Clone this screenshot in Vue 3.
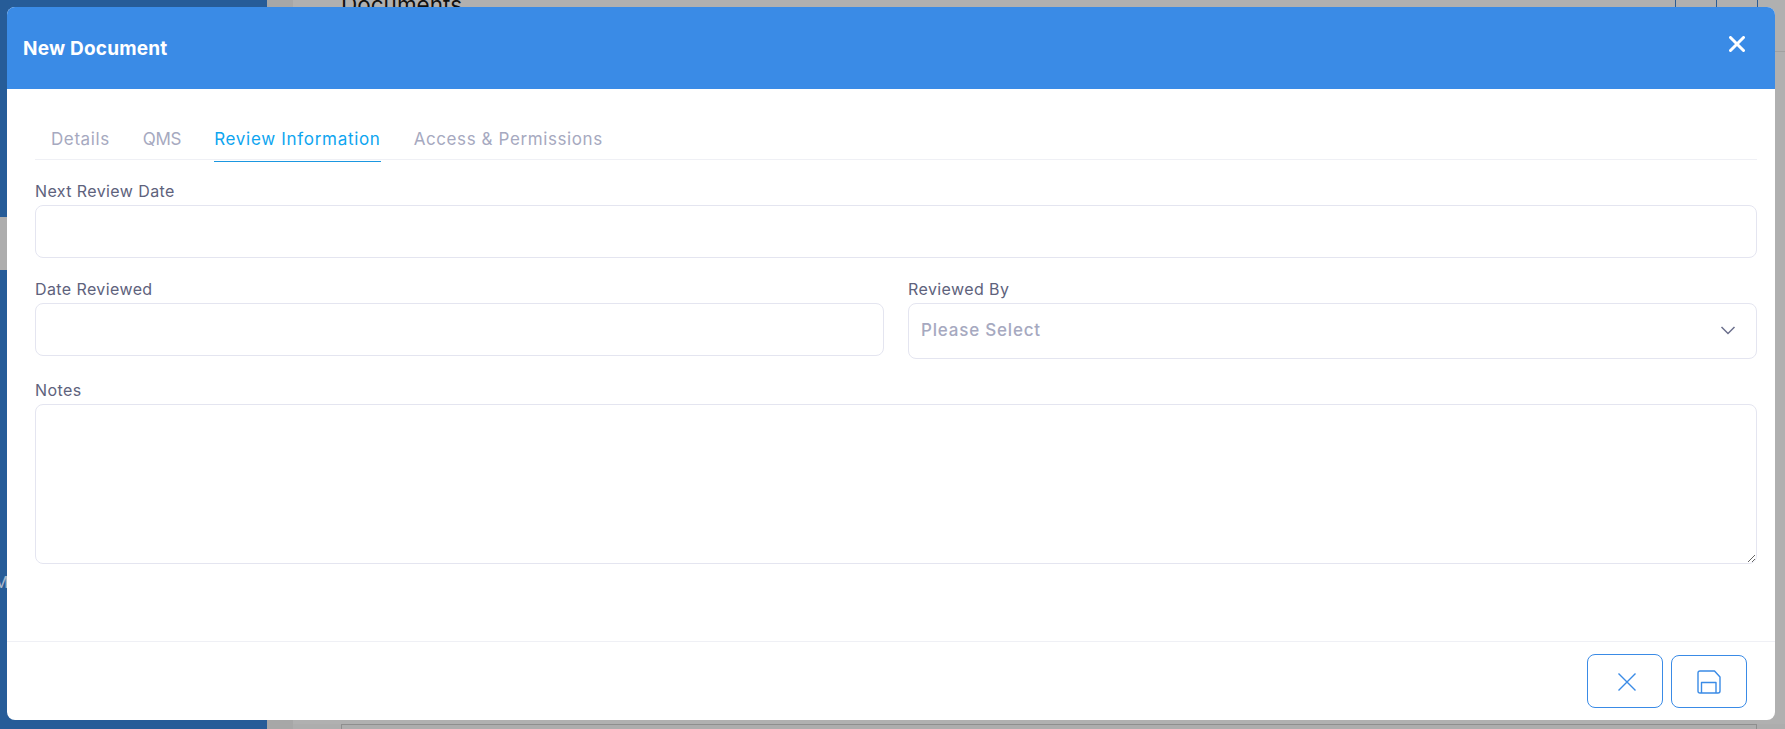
<script setup>
const tabs = [
  { label: 'Details', active: false, tight: false },
  { label: 'QMS', active: false, tight: true },
  { label: 'Review Information', active: true, tight: false },
  { label: 'Access & Permissions', active: false, tight: false },
]
</script>

<template>
  <div class="page">
    <aside class="sidebar">
      <div class="side-gap"></div>
      <span class="side-letter">M</span>
    </aside>
    <main class="backdrop-main">
      <div class="gutter"></div>
      <div class="content">
        <div class="top">
          <div class="doc-title">Documents</div>
          <div class="top-cells"><i></i><i></i></div>
          <div class="right-rule"></div>
        </div>
        <div class="bottom-card"></div>
      </div>
    </main>

    <section class="modal">
      <header class="modal-head">
        <h2>New Document</h2>
        <svg class="head-close" width="16" height="16" viewBox="0 0 16 16">
          <path d="M1.5 1.5 L14.5 14.5 M14.5 1.5 L1.5 14.5" stroke="#fff" stroke-width="3" stroke-linecap="round" />
        </svg>
      </header>

      <div class="modal-body">
        <nav class="tabs">
          <a v-for="t in tabs" :key="t.label" class="tab" :class="{ active: t.active, tight: t.tight }">{{ t.label }}</a>
        </nav>

        <div class="field first">
          <label>Next Review Date</label>
          <input type="text" class="control" />
        </div>

        <div class="row">
          <div class="field">
            <label>Date Reviewed</label>
            <input type="text" class="control" />
          </div>
          <div class="field">
            <label>Reviewed By</label>
            <div class="control select">
              <span>Please Select</span>
              <svg width="16" height="9" viewBox="0 0 16 9" fill="none">
                <path d="M1.5 1 L8 7.5 L14.5 1" stroke="#6b6f8c" stroke-width="1.5" />
              </svg>
            </div>
          </div>
        </div>

        <div class="field">
          <label>Notes</label>
          <textarea class="control area"></textarea>
        </div>
      </div>

      <footer class="modal-foot">
        <button class="btn cancel" type="button" aria-label="Cancel">
          <svg class="cancel-icon" width="18" height="18" viewBox="0 0 18 18" fill="none">
            <path d="M0.5 0.5 L17.5 17.5 M17.5 0.5 L0.5 17.5" stroke="#3a8be6" stroke-width="1.4" />
          </svg>
        </button>
        <button class="btn save" type="button" aria-label="Save">
          <svg width="24" height="24" viewBox="0 0 24 24" fill="none" stroke="#3a8be6" stroke-width="1.4" stroke-linejoin="round">
            <path d="M3 1 H17.5 L23 7 V21 Q23 23 21 23 H3 Q1 23 1 21 V3 Q1 1 3 1 Z" />
            <path d="M4.5 23 V12.5 H19 V23" />
          </svg>
        </button>
      </footer>
    </section>
  </div>
</template>

<style>
html, body { margin: 0; background: #adadad; overflow: hidden; }
</style>

<style scoped>
.page {
  width: 1785px;
  height: 729px;
  display: flex;
  overflow: hidden;
  position: relative;
  font-family: Inter, "Open Sans", sans-serif;
  background: #adadad;
}
.sidebar {
  width: 267px;
  flex: none;
  background: #265c98;
  position: relative;
  padding-top: 217px;
  box-sizing: border-box;
}
.side-gap { height: 53px; background: #adadad; }
.side-letter {
  position: absolute;
  left: -6px;
  top: 572px;
  font-size: 16px;
  color: #a9b9cd;
}
.backdrop-main { flex: 1; display: flex; min-width: 0; }
.gutter { width: 26px; flex: none; background: #a7a7a7; }
.content { flex: 1; display: flex; flex-direction: column; }
.top { height: 724px; flex: none; position: relative; background: #b0b0b0; }
.bottom-card {
  flex: 1;
  margin: 0 28px 0 48px;
  border: 1px solid #8e8e8e;
  border-bottom: 0;
}
.doc-title {
  position: absolute;
  left: 48px;
  top: -9px;
  font-size: 22.5px;
  color: #111;
}
.top-cells {
  position: absolute;
  left: 1382px;
  top: 0;
  display: flex;
}
.top-cells i {
  display: block;
  width: 40px;
  height: 7px;
  border-left: 1px solid #2a5c95;
}
.top-cells i:last-child { border-right: 1px solid #2a5c95; }
.right-rule {
  position: absolute;
  right: 0;
  top: 51px;
  width: 10px;
  height: 1px;
  background: #a0a0a0;
}

.modal {
  position: absolute;
  left: 7px;
  top: 7px;
  width: 1768px;
  height: 713px;
  background: #fff;
  border-radius: 8px;
  display: flex;
  flex-direction: column;
  overflow: hidden;
}
.modal-head {
  height: 82px;
  flex: none;
  background: #3a8be6;
  display: flex;
  align-items: center;
  justify-content: space-between;
  padding: 0 30px 0 16px;
}
.modal-head h2 {
  margin: 0;
  font-size: 19px;
  font-weight: 700;
  color: #fff;
  letter-spacing: 0.2px;
}
.head-close { display: block; margin-top: -8px; }

.modal-body {
  flex: 1;
  padding: 32px 18px 0 28px;
  min-height: 0;
}
.tabs {
  display: flex;
  gap: 33px;
  height: 39px;
  box-sizing: border-box;
  padding-left: 16px;
  border-bottom: 1px solid #eff0f5;
}
.tab {
  font-size: 17px;
  letter-spacing: 0.6px;
  line-height: 36px;
  height: 41px;
  box-sizing: border-box;
  color: #a6a9c0;
}
.tab.tight { letter-spacing: -0.3px; }
.tab.active {
  color: #0ea5f0;
  letter-spacing: 0.7px;
  border-bottom: 1px solid #1b97e0;
}
.field { display: flex; flex-direction: column; }
.field.first { margin-top: 20px; }
.field label {
  font-size: 16px;
  letter-spacing: 0.4px;
  line-height: 22px;
  color: #5e627c;
  margin-bottom: 3px;
}
.row {
  display: grid;
  grid-template-columns: 1fr 1fr;
  gap: 24px;
  margin-top: 20px;
  margin-bottom: 20px;
}
.control {
  box-sizing: border-box;
  width: 100%;
  height: 53px;
  border: 1px solid #e4e5f0;
  border-radius: 8px;
  background: #fff;
  outline: none;
  display: block;
  margin: 0;
  padding: 0 12px;
}
.select {
  height: 56px;
  display: flex;
  align-items: center;
  justify-content: space-between;
  padding: 0 20px 2px 12px;
  font-size: 17px;
  letter-spacing: 0.8px;
  font-weight: 500;
  color: #a6a9c0;
}
.area { height: 160px; resize: vertical; }

.modal-foot {
  height: 79px;
  flex: none;
  box-sizing: border-box;
  border-top: 1px solid #eff0f5;
  display: flex;
  justify-content: flex-end;
  align-items: flex-end;
  gap: 8px;
  padding: 0 28px 12px 0;
}
.btn {
  width: 76px;
  background: #fff;
  border: 1px solid #3a8be6;
  border-radius: 8px;
  display: flex;
  align-items: center;
  justify-content: center;
  padding: 0;
}
.cancel { height: 54px; }
.save { height: 53px; }
.cancel-icon { margin: 2px 0 0 3px; }
</style>
